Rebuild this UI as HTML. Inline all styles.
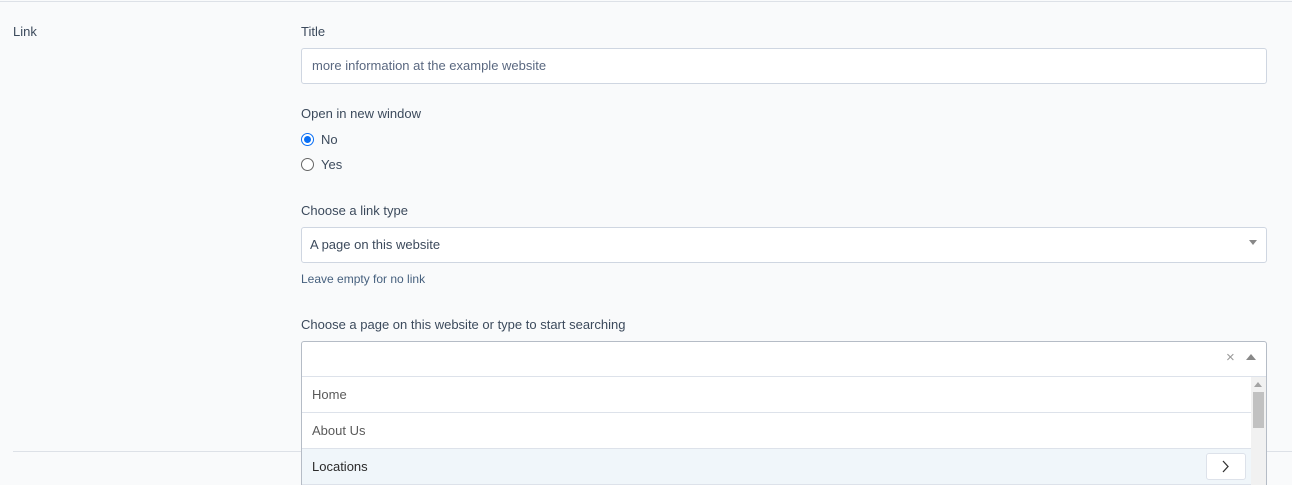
<!DOCTYPE html>
<html><head><style>
*{box-sizing:border-box;margin:0;padding:0}
body{width:1292px;height:485px;overflow:hidden;background:#f9fafb;font-family:"Liberation Sans",sans-serif;font-size:13px;color:#3c4a5c;position:relative}
.a{position:absolute}
.lbl{position:absolute;left:301px;color:#3c4a5c}
.inp{position:absolute;left:301px;width:966px;height:36px;background:#fff;border:1px solid #cfd6e1;border-radius:3px;padding-left:10px;line-height:34px;color:#5a6880}
.item{position:absolute;left:302px;width:949px;height:36px;border-bottom:1px solid #dde2ea;padding-left:10px;line-height:36px;color:#5a5a5a;background:#fff}
</style></head><body>
<div class="a" style="left:0;top:1px;width:1292px;height:1px;background:#dde1e7"></div>
<div class="a" style="left:13px;top:451px;width:1279px;height:1px;background:#dde1e7"></div>
<div class="a" style="left:13px;top:24px">Link</div>
<div class="lbl" style="top:24px">Title</div>
<div class="inp" style="top:48px">more information at the example website</div>
<div class="lbl" style="top:106px">Open in new window</div>
<div class="a" style="left:301px;top:133px;width:13px;height:13px;border-radius:50%;border:1px solid #0a6ff5;background:#fff"><div style="margin:2px;width:7px;height:7px;border-radius:50%;background:#0a6ff5"></div></div>
<div class="lbl" style="left:321px;top:132px">No</div>
<div class="a" style="left:301px;top:158px;width:13px;height:13px;border-radius:50%;border:1px solid #666;background:#fff"></div>
<div class="lbl" style="left:321px;top:157px">Yes</div>
<div class="lbl" style="top:203px">Choose a link type</div>
<div class="inp" style="top:227px;padding-left:8px;color:#3c4a5c">A page on this website</div>
<div class="a" style="left:1249px;top:240px;border-left:4px solid transparent;border-right:4px solid transparent;border-top:5px solid #888"></div>
<div class="lbl" style="top:272px;font-size:12px;color:#46607e">Leave empty for no link</div>
<div class="lbl" style="top:317px">Choose a page on this website or type to start searching</div>
<div class="a" style="left:301px;top:341px;width:966px;height:144px;background:#fff;border:1px solid #b5bcc6;border-radius:3px 3px 0 0"></div>
<div class="a" style="left:302px;top:376px;width:964px;height:1px;background:#dde2ea"></div>
<div class="a" style="left:1226px;top:349px;color:#999;font-size:15px">×</div>
<div class="a" style="left:1246px;top:354px;border-left:5px solid transparent;border-right:5px solid transparent;border-bottom:6px solid #888"></div>
<div class="item" style="top:377px">Home</div>
<div class="item" style="top:413px">About Us</div>
<div class="item" style="top:449px;background:#f0f6fa;color:#2a2a2a">Locations</div>
<div class="a" style="left:1206px;top:453px;width:40px;height:27px;border:1px solid #dde2ea;border-radius:3px;background:#fff"><svg width="38" height="25"><path d="M16 7l5 5.5-5 5.5" fill="none" stroke="#333" stroke-width="1.3"/></svg></div>
<div class="a" style="left:1251px;top:377px;width:15px;height:108px;background:#f1f1f1"></div>
<div class="a" style="left:1254px;top:382px;border-left:4px solid transparent;border-right:4px solid transparent;border-bottom:5px solid #a3a3a3"></div>
<div class="a" style="left:1253px;top:392px;width:11px;height:36px;background:#c1c1c1"></div>
</body></html>
